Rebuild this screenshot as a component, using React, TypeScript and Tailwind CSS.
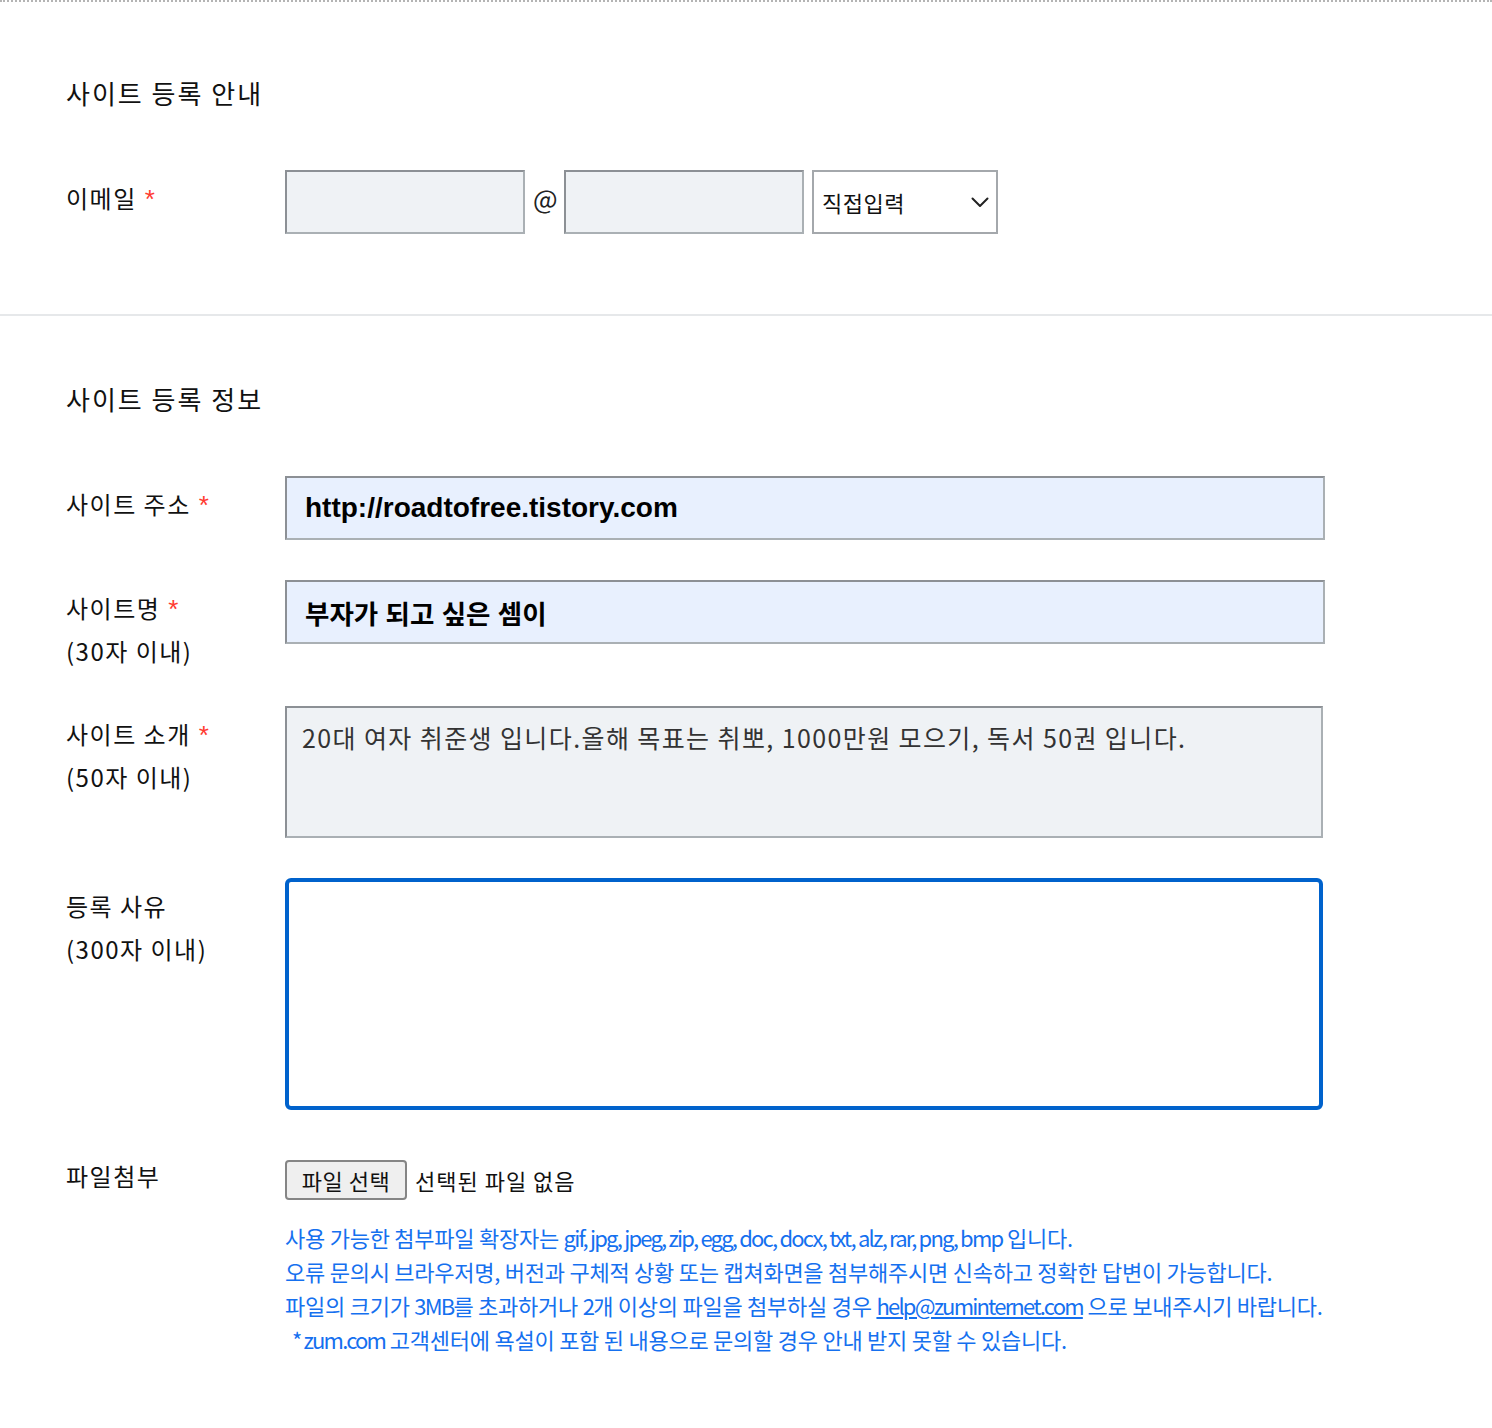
import React from 'react';

const Req = () => (
  <span className="ml-[8px] font-['Liberation_Sans',sans-serif] text-[26px] leading-none text-[#ff3b30]">*</span>
);

const Label = ({ children }: { children: React.ReactNode }) => (
  <div className="w-[219px] flex-none pt-[6px] text-[24px] leading-[43px] tracking-[1.5px] text-[#111]">{children}</div>
);

const inputBox =
  'border-2 border-t-[#8c9095] border-l-[#8c9095] border-b-[#aab0b4] border-r-[#aab0b4] outline-none';

const Latin = ({ children }: { children: React.ReactNode }) => <span className="tracking-[-1.8px]">{children}</span>;

const App = () => {
  return (
    <div className="min-h-screen bg-white font-['Noto_Sans_CJK_KR',sans-serif] text-[#111]">
      <div className="border-t-2 border-dotted border-[#b4b4b4]" />

      <section className="px-[66px] pt-[73px] pb-[80px]">
        <h2 className="text-[26px] leading-[36px] font-normal tracking-[2px]">사이트 등록 안내</h2>
        <div className="mt-[59px] flex">
          <Label>
            이메일<Req />
          </Label>
          <div className="flex items-center gap-2">
            <input type="text" className={`h-[64px] w-[240px] bg-[#eff2f5] ${inputBox}`} />
            <span className="w-[23px] pb-[8px] text-center text-[26px] leading-none text-[#222]">@</span>
            <input type="text" className={`h-[64px] w-[240px] bg-[#eff2f5] ${inputBox}`} />
            <div className="flex h-[64px] w-[186px] items-center justify-between border-2 border-[#a4a8ac] bg-white pl-[8px] pr-[7px]">
              <span className="text-[22px] tracking-[0.5px] text-[#111]">직접입력</span>
              <svg width="18" height="11" viewBox="0 0 18 11" fill="none">
                <path d="M1.5 1.5 L9 9 L16.5 1.5" stroke="#222" strokeWidth="2" strokeLinecap="round" strokeLinejoin="round" />
              </svg>
            </div>
          </div>
        </div>
      </section>

      <div className="h-[2px] bg-[#e6e8ea]" />

      <section className="px-[66px] pt-[65px] pb-[70px]">
        <h2 className="text-[26px] leading-[36px] font-normal tracking-[2px]">사이트 등록 정보</h2>

        <div className="mt-[59px] flex">
          <Label>
            사이트 주소<Req />
          </Label>
          <input
            type="text"
            defaultValue="http://roadtofree.tistory.com"
            className={`h-[64px] w-[1040px] bg-[#e8f0fe] px-[18px] font-['Liberation_Sans',sans-serif] text-[28px] font-bold text-black ${inputBox}`}
          />
        </div>

        <div className="mt-[40px] flex">
          <Label>
            사이트명<Req />
            <br />
            (30자 이내)
          </Label>
          <input
            type="text"
            defaultValue="부자가 되고 싶은 셈이"
            className={`h-[64px] w-[1040px] bg-[#e8f0fe] px-[18px] font-['Liberation_Sans','Noto_Sans_CJK_KR',sans-serif] text-[26.5px] font-bold text-black ${inputBox}`}
          />
        </div>

        <div className="mt-[34px] flex">
          <Label>
            사이트 소개<Req />
            <br />
            (50자 이내)
          </Label>
          <textarea
            defaultValue="20대 여자 취준생 입니다.올해 목표는 취뽀, 1000만원 모으기, 독서 50권 입니다."
            className={`h-[132px] w-[1038px] resize-none bg-[#eff2f5] px-[15px] pt-[11px] text-[25px] leading-[36px] tracking-[1.4px] text-[#333] ${inputBox}`}
          />
        </div>

        <div className="mt-[40px] flex">
          <Label>
            등록 사유
            <br />
            (300자 이내)
          </Label>
          <textarea className="h-[232px] w-[1038px] resize-none rounded-[6px] border-4 border-[#0062cc] bg-white outline-none" />
        </div>

        <div className="mt-[38px] flex">
          <Label>파일첨부</Label>
          <div className="pt-[12px]">
            <div className="flex items-center">
              <button
                type="button"
                className="flex h-[40px] w-[122px] items-center justify-center rounded-[4px] border-2 border-[#858585] bg-[#efefef] text-[22px] tracking-[0.5px] text-[#111]"
              >
                파일 선택
              </button>
              <span className="ml-[8px] text-[22px] tracking-[1px] text-[#111]">선택된 파일 없음</span>
            </div>
            <div className="mt-[20px] text-[22px] leading-[34px] tracking-[-0.25px] text-[#1570ef]">
              <p>
                사용 가능한 첨부파일 확장자는{' '}
                <Latin>gif, jpg, jpeg, zip, egg, doc, docx, txt, alz, rar, png, bmp</Latin> 입니다.
              </p>
              <p>오류 문의시 브라우저명, 버전과 구체적 상황 또는 캡쳐화면을 첨부해주시면 신속하고 정확한 답변이 가능합니다.</p>
              <p>
                파일의 크기가 <Latin>3MB</Latin>를 초과하거나 <Latin>2</Latin>개 이상의 파일을 첨부하실 경우{' '}
                <a href="#" className="underline">
                  <Latin>help@zuminternet.com</Latin>
                </a>{' '}
                으로 보내주시기 바랍니다.
              </p>
              <p className="pl-[7px]">
                <Latin>* zum.com</Latin> 고객센터에 욕설이 포함 된 내용으로 문의할 경우 안내 받지 못할 수 있습니다.
              </p>
            </div>
          </div>
        </div>
      </section>
    </div>
  );
};

export default App;
